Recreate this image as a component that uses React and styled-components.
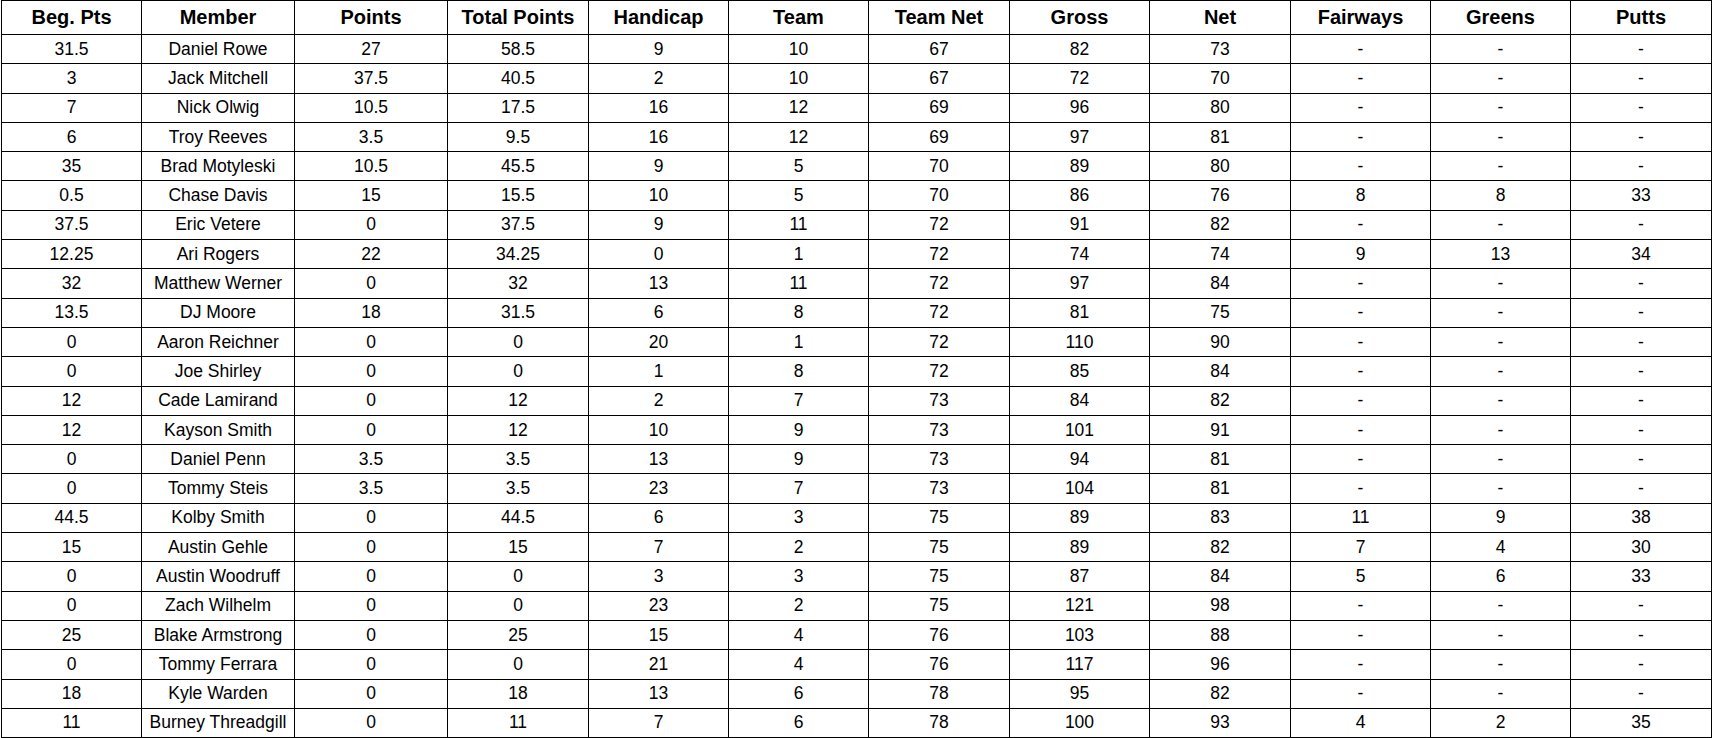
import React from "react";
import styled, { createGlobalStyle } from "styled-components";

const GlobalStyle = createGlobalStyle`
  html, body {
    margin: 0;
    padding: 0;
    background: #fff;
  }
  body {
    font-family: "Liberation Sans", Arial, sans-serif;
    color: #000;
  }
`;

const COLUMNS = [
  { label: "Beg. Pts", width: 140 },
  { label: "Member", width: 153 },
  { label: "Points", width: 153 },
  { label: "Total Points", width: 141 },
  { label: "Handicap", width: 140 },
  { label: "Team", width: 140 },
  { label: "Team Net", width: 141 },
  { label: "Gross", width: 140 },
  { label: "Net", width: 141 },
  { label: "Fairways", width: 140 },
  { label: "Greens", width: 140 },
  { label: "Putts", width: 141 }
];

const ROWS = [
  ["31.5", "Daniel Rowe", "27", "58.5", "9", "10", "67", "82", "73", "-", "-", "-"],
  ["3", "Jack Mitchell", "37.5", "40.5", "2", "10", "67", "72", "70", "-", "-", "-"],
  ["7", "Nick Olwig", "10.5", "17.5", "16", "12", "69", "96", "80", "-", "-", "-"],
  ["6", "Troy Reeves", "3.5", "9.5", "16", "12", "69", "97", "81", "-", "-", "-"],
  ["35", "Brad Motyleski", "10.5", "45.5", "9", "5", "70", "89", "80", "-", "-", "-"],
  ["0.5", "Chase Davis", "15", "15.5", "10", "5", "70", "86", "76", "8", "8", "33"],
  ["37.5", "Eric Vetere", "0", "37.5", "9", "11", "72", "91", "82", "-", "-", "-"],
  ["12.25", "Ari Rogers", "22", "34.25", "0", "1", "72", "74", "74", "9", "13", "34"],
  ["32", "Matthew Werner", "0", "32", "13", "11", "72", "97", "84", "-", "-", "-"],
  ["13.5", "DJ Moore", "18", "31.5", "6", "8", "72", "81", "75", "-", "-", "-"],
  ["0", "Aaron Reichner", "0", "0", "20", "1", "72", "110", "90", "-", "-", "-"],
  ["0", "Joe Shirley", "0", "0", "1", "8", "72", "85", "84", "-", "-", "-"],
  ["12", "Cade Lamirand", "0", "12", "2", "7", "73", "84", "82", "-", "-", "-"],
  ["12", "Kayson Smith", "0", "12", "10", "9", "73", "101", "91", "-", "-", "-"],
  ["0", "Daniel Penn", "3.5", "3.5", "13", "9", "73", "94", "81", "-", "-", "-"],
  ["0", "Tommy Steis", "3.5", "3.5", "23", "7", "73", "104", "81", "-", "-", "-"],
  ["44.5", "Kolby Smith", "0", "44.5", "6", "3", "75", "89", "83", "11", "9", "38"],
  ["15", "Austin Gehle", "0", "15", "7", "2", "75", "89", "82", "7", "4", "30"],
  ["0", "Austin Woodruff", "0", "0", "3", "3", "75", "87", "84", "5", "6", "33"],
  ["0", "Zach Wilhelm", "0", "0", "23", "2", "75", "121", "98", "-", "-", "-"],
  ["25", "Blake Armstrong", "0", "25", "15", "4", "76", "103", "88", "-", "-", "-"],
  ["0", "Tommy Ferrara", "0", "0", "21", "4", "76", "117", "96", "-", "-", "-"],
  ["18", "Kyle Warden", "0", "18", "13", "6", "78", "95", "82", "-", "-", "-"],
  ["11", "Burney Threadgill", "0", "11", "7", "6", "78", "100", "93", "4", "2", "35"],
  ["", "", "", "", "", "", "", "", "", "", "", ""]
];

const Page = styled.div`
  padding-left: 1px;
`;

const Table = styled.table`
  border-collapse: collapse;
  table-layout: fixed;
  width: 1711px;
  border: 1px solid #000;
`;

const HeadCell = styled.th`
  height: 33px;
  padding: 0;
  border: 1px solid #000;
  font-size: 20px;
  font-weight: bold;
  text-align: center;
  vertical-align: middle;
  white-space: nowrap;
`;

const Cell = styled.td`
  height: 28.3px;
  padding: 0;
  border: 1px solid #000;
  font-size: 17.5px;
  text-align: center;
  vertical-align: middle;
  white-space: nowrap;
`;

export default function App() {
  return (
    <Page>
      <GlobalStyle />
      <Table>
        <colgroup>
          {COLUMNS.map(c => (
            <col key={c.label} style={{ width: c.width }} />
          ))}
        </colgroup>
        <thead>
          <tr>
            {COLUMNS.map(c => (
              <HeadCell key={c.label}>{c.label}</HeadCell>
            ))}
          </tr>
        </thead>
        <tbody>
          {ROWS.map((row, i) => (
            <tr key={i}>
              {row.map((v, j) => (
                <Cell key={j}>{v}</Cell>
              ))}
            </tr>
          ))}
        </tbody>
      </Table>
    </Page>
  );
}
